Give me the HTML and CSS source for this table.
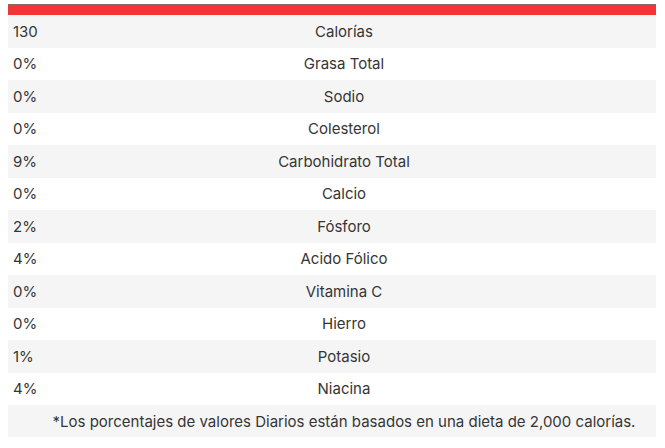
FILE: index.html
```html
<!DOCTYPE html>
<html lang="es">
<head>
<meta charset="utf-8">
<link rel="stylesheet" href="styles.css">
</head>
<body>
<div class="table">
  <div class="head"></div>
  <div class="row"><span class="val">130</span><span class="name">Calorías</span></div>
  <div class="row"><span class="val">0%</span><span class="name">Grasa Total</span></div>
  <div class="row"><span class="val">0%</span><span class="name">Sodio</span></div>
  <div class="row"><span class="val">0%</span><span class="name">Colesterol</span></div>
  <div class="row"><span class="val">9%</span><span class="name">Carbohidrato Total</span></div>
  <div class="row"><span class="val">0%</span><span class="name">Calcio</span></div>
  <div class="row"><span class="val">2%</span><span class="name">Fósforo</span></div>
  <div class="row"><span class="val">4%</span><span class="name">Acido Fólico</span></div>
  <div class="row"><span class="val">0%</span><span class="name">Vitamina C</span></div>
  <div class="row"><span class="val">0%</span><span class="name">Hierro</span></div>
  <div class="row"><span class="val">1%</span><span class="name">Potasio</span></div>
  <div class="row"><span class="val">4%</span><span class="name">Niacina</span></div>
  <div class="row note"><span class="val"></span><span class="name">*Los porcentajes de valores Diarios están basados en una dieta de 2,000 calorías.</span></div>
</div>
</body>
</html>
```
FILE: styles.css
```css
html, body {
  margin: 0;
  padding: 0;
  background: #ffffff;
}
body {
  padding: 4px 9px 0 8px;
  font-family: Inter, "Noto Sans", sans-serif;
  font-size: 15px;
  color: #353535;
}
.table {
  display: flex;
  flex-direction: column;
}
.head {
  height: 10px;
  background: #f43533;
  border-top: 1px solid #8a6a6a;
}
.row {
  display: grid;
  grid-template-columns: 24px 1fr;
  align-items: center;
  height: 32.5px;
  background: #ffffff;
}
.row:nth-child(even) {
  background: #f5f5f5;
}
.note {
  height: 32px;
}
.val {
  padding-left: 5px;
  white-space: nowrap;
}
.name {
  text-align: center;
  white-space: nowrap;
}
```
